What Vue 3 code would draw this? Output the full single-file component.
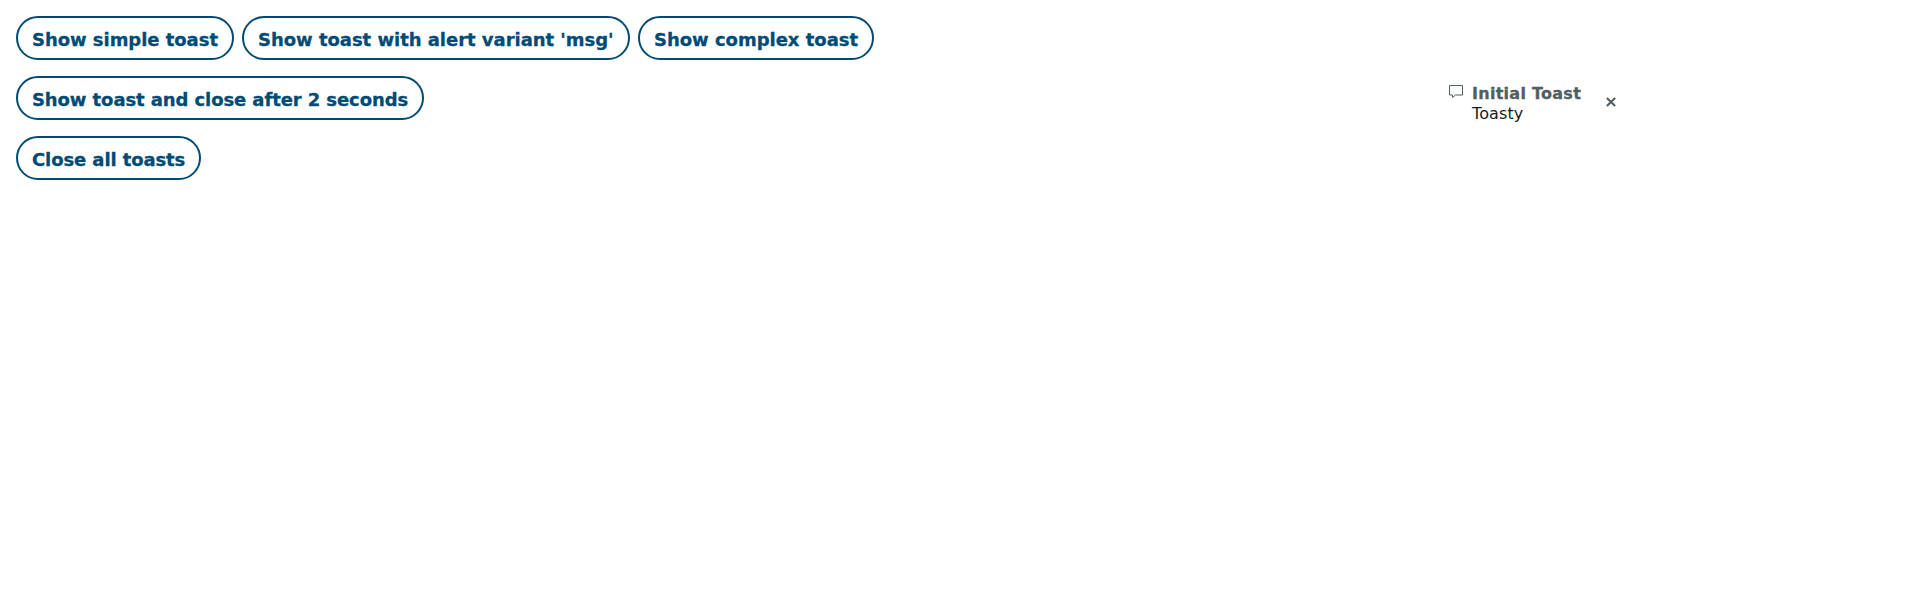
<script setup>
const rows = [
  [
    { label: 'Show simple toast', kind: 'simple' },
    { label: "Show toast with alert variant 'msg'", kind: 'variant' },
    { label: 'Show complex toast', kind: 'complex' },
  ],
  [{ label: 'Show toast and close after 2 seconds', kind: 'timed' }],
  [{ label: 'Close all toasts', kind: 'close-all' }],
]
</script>

<template>
  <main class="page">
    <div v-for="(row, i) in rows" :key="i" class="row">
      <button v-for="b in row" :key="b.kind" type="button" class="button" :class="b.kind">{{ b.label }}</button>
    </div>
    <section class="toast">
      <svg class="icon" width="14" height="13" viewBox="0 0 14 13">
        <path d="M.5.5h13v9.5H6.5L3.5 12.4V10h-3z" fill="none" stroke="#525e62" />
      </svg>
      <div class="body">
        <div class="title">Initial Toast</div>
        <div class="text">Toasty</div>
      </div>
      <svg class="close" width="10" height="10" viewBox="0 0 10 10">
        <path d="M.9.9l8.2 8.2M9.1.9L.9 9.1" fill="none" stroke="#525e62" stroke-width="2.1" />
      </svg>
    </section>
  </main>
</template>

<style>
body {
  background: #fff;
}
</style>

<style scoped>
.page {
  display: flex;
  flex-direction: column;
  gap: 16px;
  padding: 16px;
  font-family: Verdana, "DejaVu Sans", sans-serif;
}
.row {
  display: flex;
  gap: 8px;
}
.button {
  box-sizing: border-box;
  height: 44px;
  padding: 3px 0 0 14px;
  border: 2px solid #004b76;
  border-radius: 22px;
  background: #fff;
  color: #004b76;
  font-family: inherit;
  font-size: 18px;
  font-weight: 700;
  line-height: 24px;
  text-align: left;
  white-space: nowrap;
  -webkit-text-stroke: 0.3px currentColor;
}
.simple { width: 218px; letter-spacing: -0.04px; }
.variant { width: 388px; letter-spacing: -0.03px; }
.complex { width: 236px; letter-spacing: -0.02px; }
.timed { width: 408px; letter-spacing: -0.09px; }
.close-all { width: 185px; letter-spacing: -0.1px; }
.toast {
  position: absolute;
  top: 83px;
  left: 1449px;
  display: flex;
  align-items: flex-start;
  font-size: 16px;
  line-height: 20px;
  white-space: nowrap;
}
.icon {
  margin-top: 2px;
}
.body {
  width: 134px;
  margin-top: 1px;
  margin-left: 9px;
}
.title {
  color: #525e62;
  font-weight: 700;
  letter-spacing: 0.27px;
  -webkit-text-stroke: 0.3px currentColor;
}
.text {
  color: #1a1a1a;
  letter-spacing: 0.1px;
}
.close {
  margin-top: 14px;
}
</style>
